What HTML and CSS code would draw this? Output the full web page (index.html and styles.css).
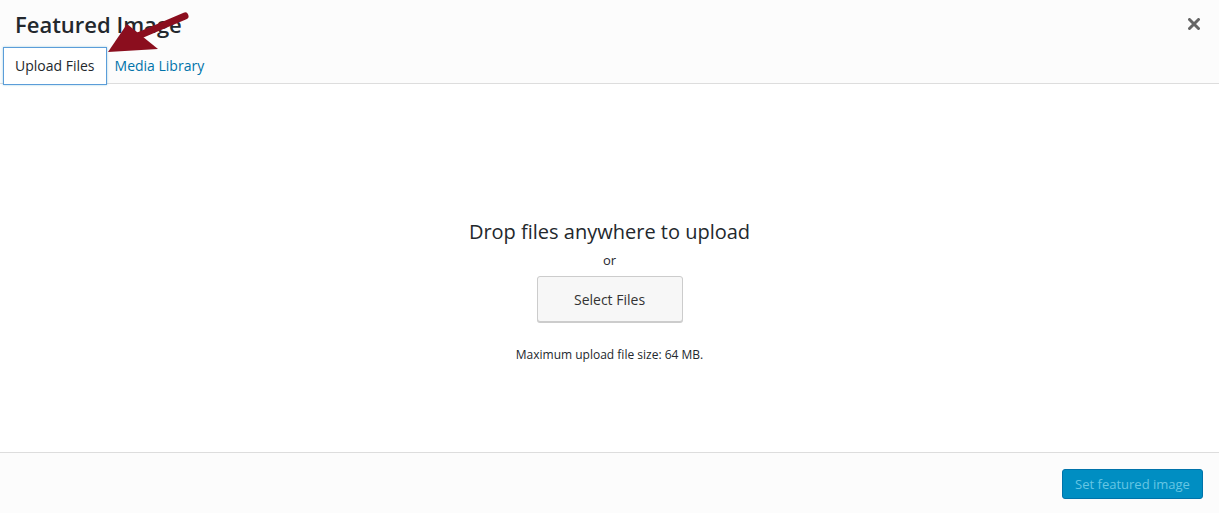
FILE: index.html
```html
<!DOCTYPE html>
<html>
<head>
<meta charset="utf-8">
<link rel="stylesheet" href="styles.css">
</head>
<body>
<div class="modal">
  <div class="head">
    <h1 class="title">Featured Image</h1>
    <button class="close" aria-label="Close">
      <svg width="12" height="12" viewBox="0 0 12 12"><path d="M1.5 1.5 L10.5 10.5 M10.5 1.5 L1.5 10.5" stroke="#666" stroke-width="3" stroke-linecap="round"/></svg>
    </button>
  </div>
  <div class="router">
    <a class="tab active">Upload Files</a>
    <a class="tab">Media Library</a>
  </div>
  <div class="content">
    <div class="uploader">
      <p class="drop">Drop files anywhere to upload</p>
      <p class="or">or</p>
      <button class="select">Select Files</button>
      <p class="max">Maximum upload file size: 64 MB.</p>
    </div>
  </div>
  <div class="toolbar">
    <button class="primary">Set featured image</button>
  </div>
  <svg class="arrow" width="100" height="50" viewBox="100 5 100 50">
    <path d="M185 16 L138 36" stroke="#8b0e1e" stroke-width="7" stroke-linecap="round"/>
    <polygon points="108,52 127,24 158,49" fill="#8b0e1e"/>
  </svg>
</div>
</body>
</html>
```

FILE: styles.css
```css
* { box-sizing: border-box; }
html, body { margin: 0; padding: 0; }
body {
  font-family: "Open Sans", "Liberation Sans", sans-serif;
  color: #23282d;
  background: #fff;
  width: 1219px;
  height: 513px;
  overflow: hidden;
}
.modal {
  position: relative;
  height: 513px;
  display: flex;
  flex-direction: column;
  background: #fff;
}
.head {
  height: 47px;
  display: flex;
  align-items: center;
  justify-content: space-between;
  padding: 0 17px 0 15px;
  background: #fcfcfc;
}
.title {
  margin: 0;
  font-size: 22px;
  font-weight: 600;
  line-height: 1;
  color: #23282d;
}
.close {
  border: 0;
  background: none;
  padding: 0;
  width: 16px;
  height: 16px;
  display: flex;
  align-items: center;
  justify-content: center;
}
.router {
  display: flex;
  height: 37px;
  padding-left: 3px;
  border-bottom: 1px solid #ddd;
  background: #fcfcfc;
}
.tab {
  font-size: 14px;
  line-height: 36px;
  padding: 0 7px;
  color: #0073aa;
  height: 38px;
  border: 1px solid transparent;
  background: transparent;
}
.tab.active {
  padding: 0 11px;
  color: #23282d;
  border: 1px solid #5b9dd9;
  background: #fff;
  box-shadow: 0 0 2px rgba(30,140,190,.4);
  position: relative;
  z-index: 1;
}
.content {
  flex: 1;
  display: flex;
  justify-content: center;
  background: #fff;
}
.uploader {
  padding-top: 133px;
  text-align: center;
}
.drop {
  margin: 0;
  font-size: 20px;
  line-height: 30px;
  color: #23282d;
}
.or {
  margin: 3px 0 0;
  font-size: 13px;
  line-height: 20px;
  color: #23282d;
}
.select {
  margin-top: 6px;
  width: 146px;
  height: 46px;
  font-family: inherit;
  font-size: 14px;
  color: #333;
  background: #f7f7f7;
  border: 1px solid #ccc;
  border-radius: 3px;
  box-shadow: 0 1px 0 #ccc;
}
.max {
  margin: 24px 0 0;
  font-size: 12px;
  line-height: 18px;
  color: #23282d;
}
.toolbar {
  height: 61px;
  border-top: 1px solid #ddd;
  background: #fcfcfc;
  display: flex;
  justify-content: flex-end;
  align-items: center;
  padding-right: 16px;
}
.primary {
  height: 30px;
  width: 141px;
  font-family: inherit;
  font-size: 13px;
  color: #66c6e4;
  background: #008ec2;
  border: 1px solid #0073aa;
  border-radius: 3px;
  margin-top: 2px;
}
.arrow {
  position: absolute;
  left: 100px;
  top: 5px;
  z-index: 5;
}
```
